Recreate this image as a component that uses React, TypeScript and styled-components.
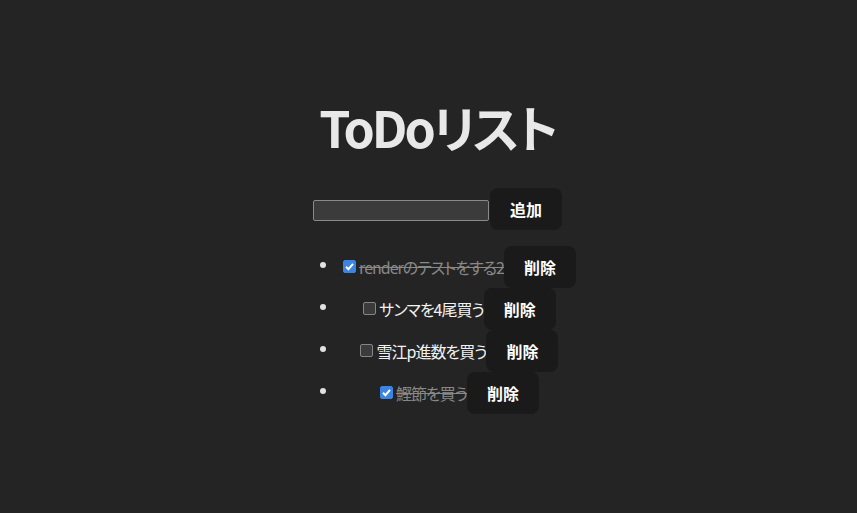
import React, { useState } from "react";
import styled, { createGlobalStyle } from "styled-components";

interface ITodo {
  id: number;
  text: string;
  done: boolean;
}

const initialTodos: ITodo[] = [
  { id: 1, text: "renderのテストをする2", done: true },
  { id: 2, text: "サンマを4尾買う", done: false },
  { id: 3, text: "雪江p進数を買う", done: false },
  { id: 4, text: "鰹節を買う", done: true },
];

const App = () => {
  const [todos, setTodos] = useState<ITodo[]>(initialTodos);
  const [text, setText] = useState("");

  const addTodo = () => {
    if (!text.trim()) return;
    setTodos([...todos, { id: Date.now(), text, done: false }]);
    setText("");
  };

  const toggleTodo = (id: number) => {
    setTodos(todos.map((t) => (t.id === id ? { ...t, done: !t.done } : t)));
  };

  const deleteTodo = (id: number) => {
    setTodos(todos.filter((t) => t.id !== id));
  };

  return (
    <>
      <GlobalStyle />
      <Root>
        <Title>ToDoリスト</Title>
        <Form>
          <TextInput
            type="text"
            value={text}
            onChange={(e) => setText(e.target.value)}
          />
          <Button onClick={addTodo}>追加</Button>
        </Form>
        <List>
          {todos.map((todo) => (
            <Item key={todo.id}>
              <CheckLabel>
                <HiddenInput
                  type="checkbox"
                  checked={todo.done}
                  onChange={() => toggleTodo(todo.id)}
                />
                <CheckBox $checked={todo.done}>
                  {todo.done && (
                    <svg width="11" height="11" viewBox="0 0 11 11">
                      <polyline
                        points="2,5.8 4.4,8.2 9,2.8"
                        fill="none"
                        stroke="#ffffff"
                        strokeWidth="2"
                      />
                    </svg>
                  )}
                </CheckBox>
                <TodoText $done={todo.done}>{todo.text}</TodoText>
              </CheckLabel>
              <Button onClick={() => deleteTodo(todo.id)}>削除</Button>
            </Item>
          ))}
        </List>
      </Root>
    </>
  );
};

export default App;

const GlobalStyle = createGlobalStyle`
  body {
    margin: 0;
    background: #242424;
    color: rgba(255, 255, 255, 0.87);
    font-family: "Noto Sans CJK JP", "Noto Sans", sans-serif;
    font-size: 16px;
    line-height: 1.5;
    font-feature-settings: "palt";
  }
`;

const Root = styled.div`
  box-sizing: border-box;
  min-height: 100vh;
  display: flex;
  flex-direction: column;
  align-items: center;
  justify-content: center;
  padding: 32px 32px 54px 50px;
  text-align: center;
`;

const Title = styled.h1`
  font-size: 50px;
  line-height: 56px;
  margin: 34px 0;
  font-weight: 600;
  letter-spacing: -3px;
  color: #e8e8e8;
`;

const Form = styled.div`
  display: flex;
  align-items: flex-end;
  gap: 1px;
`;

const TextInput = styled.input`
  box-sizing: border-box;
  width: 176px;
  height: 21px;
  margin-bottom: 9px;
  background: #3b3b3b;
  border: 1px solid #8a8a8a;
  border-radius: 2px;
  color: #ffffff;
  font-family: inherit;
  font-size: 13px;
  padding: 0 3px;
`;

const Button = styled.button`
  box-sizing: border-box;
  height: 42px;
  padding: 0 19px;
  border: 1px solid transparent;
  border-radius: 8px;
  background: #1a1a1a;
  color: #ffffff;
  font-family: inherit;
  font-size: 16px;
  font-weight: 700;
  line-height: 40px;
  cursor: pointer;
  vertical-align: middle;
`;

const List = styled.ul`
  margin: 13px 0 16px;
  padding: 0 0 0 40px;
`;

const Item = styled.li`
  list-style: disc outside;
  height: 42px;
  line-height: 42px;
  text-align: center;
  white-space: nowrap;
`;

const CheckLabel = styled.label`
  display: inline-flex;
  align-items: center;
  vertical-align: middle;
  line-height: 24px;
`;

const HiddenInput = styled.input`
  position: absolute;
  opacity: 0;
  width: 0;
  height: 0;
  margin: 0;
`;

const CheckBox = styled.span<{ $checked: boolean }>`
  box-sizing: border-box;
  width: 13px;
  height: 13px;
  margin: 0 3px 0 4px;
  display: flex;
  align-items: center;
  justify-content: center;
  border-radius: 2px;
  background: ${(p) => (p.$checked ? "#3b84e3" : "#3b3b3b")};
  border: 1px solid ${(p) => (p.$checked ? "#3b84e3" : "#858585")};
`;

const TodoText = styled.span<{ $done: boolean }>`
  letter-spacing: -1px;
  color: ${(p) => (p.$done ? "#888888" : "#f2f2f2")};
  text-decoration: ${(p) => (p.$done ? "line-through" : "none")};
`;
